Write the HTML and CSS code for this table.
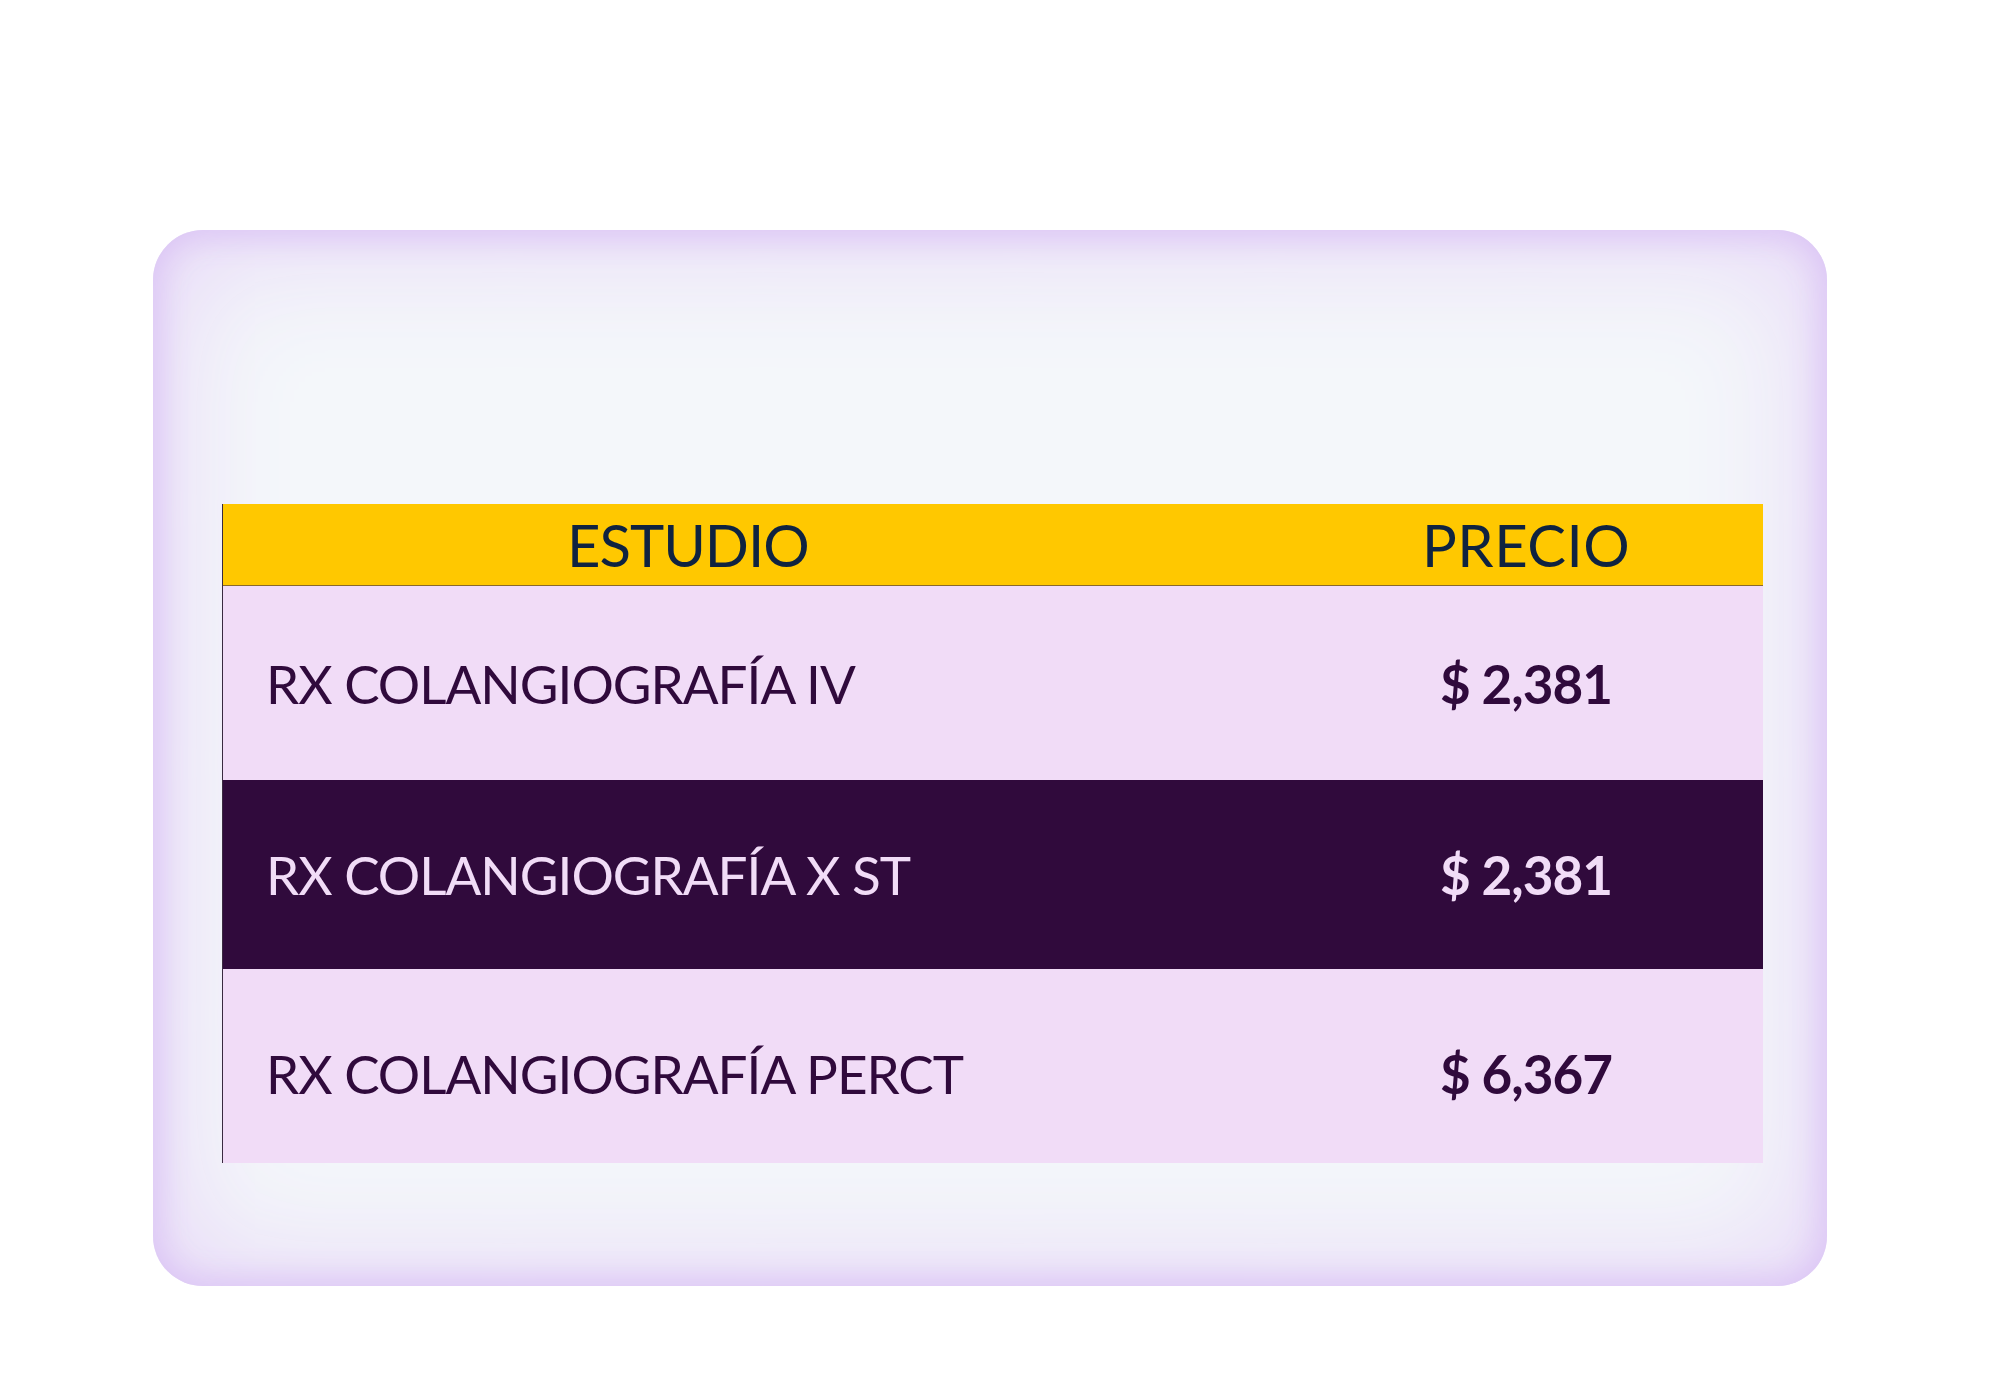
FILE: index.html
```html
<!DOCTYPE html>
<html lang="es">
<head>
    <meta charset="UTF-8">
    <title>Precios Colangiografía</title>
    <link rel="stylesheet" href="styles.css">
</head>
<body>
    <div class="card">
        <div class="price-table">
            <div class="table-head">
                <div class="head-cell head-study">ESTUDIO</div>
                <div class="head-cell head-price">PRECIO</div>
            </div>
            <div class="table-row row-light">
                <div class="cell-name">RX COLANGIOGRAFÍA IV</div>
                <div class="cell-price">$ 2,381</div>
            </div>
            <div class="table-row row-dark">
                <div class="cell-name">RX COLANGIOGRAFÍA X ST</div>
                <div class="cell-price">$ 2,381</div>
            </div>
            <div class="table-row row-light row-last">
                <div class="cell-name">RX COLANGIOGRAFÍA PERCT</div>
                <div class="cell-price">$ 6,367</div>
            </div>
        </div>
    </div>
</body>
</html>
```

FILE: styles.css
```css
body {
    margin: 0;
    background-color: #ffffff;
    font-family: "Lato", "Noto Sans", sans-serif;
}

.card {
    box-sizing: border-box;
    width: 1674px;
    height: 1056px;
    margin: 230px 0 0 153px;
    padding: 274px 64px 0 69px;
    background-color: #f4f7fa;
    border-radius: 50px;
    box-shadow: inset 0 0 30px 8px #dcc6f5, inset 0 0 130px 16px #e6d6f7;
}

.price-table {
    border-left: 1px solid #3a2a40;
}

.table-head {
    display: grid;
    grid-template-columns: 1217px 1fr;
    height: 81px;
    background-color: #ffc800;
    border-bottom: 1px solid #8a6a2a;
    color: #0f2340;
    font-size: 58px;
    line-height: 81px;
}

.head-study {
    padding-left: 344px;
    letter-spacing: -1px;
}

.head-price {
    margin-left: -18px;
    letter-spacing: 0.5px;
}

.table-row {
    display: grid;
    grid-template-columns: 1217px 1fr;
    align-items: center;
    height: 194px;
    font-size: 53px;
}

.row-light {
    background-color: #f1dcf7;
    color: #300a3c;
}

.row-dark {
    height: 189px;
    background-color: #300a3c;
    color: #f1dcf7;
}

.row-last {
    box-sizing: border-box;
    padding-top: 14px;
}

.cell-name {
    padding-left: 43px;
    letter-spacing: -1px;
}

.cell-price {
    font-weight: bold;
    letter-spacing: -1px;
}
```
